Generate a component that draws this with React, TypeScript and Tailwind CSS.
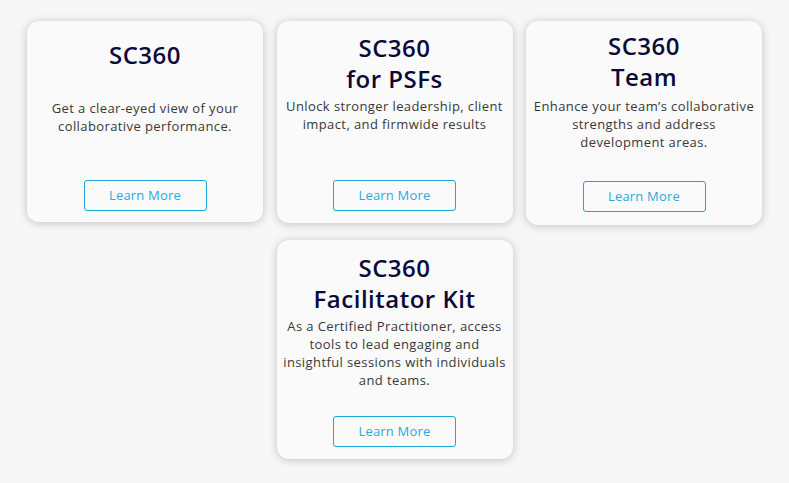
import React from 'react';

type Card = {
  title: string[];
  lines: string[];
  cls: string;
  titleCls: string;
};

const cards: Card[] = [
  {
    title: ['SC360'],
    lines: ['Get a clear-eyed view of your', 'collaborative performance.'],
    cls: 'h-[201px] pt-[18px] pb-[11px]',
    titleCls: 'mb-[29px]',
  },
  {
    title: ['SC360', 'for PSFs'],
    lines: ['Unlock stronger leadership, client', 'impact, and firmwide results'],
    cls: 'h-[202px] pt-[11px] pb-[12px]',
    titleCls: 'mb-[3px]',
  },
  {
    title: ['SC360', 'Team'],
    lines: ['Enhance your team’s collaborative', 'strengths and address', 'development areas.'],
    cls: 'h-[204px] pt-[9px] pb-[13px]',
    titleCls: 'mb-[5px]',
  },
  {
    title: ['SC360', 'Facilitator Kit'],
    lines: [
      'As a Certified Practitioner, access',
      'tools to lead engaging and',
      'insightful sessions with individuals',
      'and teams.',
    ],
    cls: 'h-[219px] pt-[12px] pb-[12px]',
    titleCls: 'mb-[3px]',
  },
];

export default function App() {
  return (
    <div
      className="min-h-screen w-full bg-[#f7f7f7] pt-[21px]"
      style={{ fontFamily: '"Open Sans", "Liberation Sans", sans-serif' }}
    >
      <div className="flex flex-wrap items-start justify-center gap-x-[13.5px] gap-y-[15px]">
        {cards.map((card, i) => (
          <div
            key={i}
            className={`flex w-[236px] flex-col items-center rounded-[12px] bg-[#fafafa] px-2 shadow-[0_1px_10px_rgba(0,0,0,0.22)] ${card.cls}`}
          >
            <h3 className={`text-center text-[24px] font-semibold leading-[31px] tracking-[0.5px] text-[#0a0a3a] ${card.titleCls}`}>
              {card.title.map((t, j) => (
                <div key={j} className="whitespace-nowrap">{t}</div>
              ))}
            </h3>
            <p className="text-center text-[13px] leading-[18px] tracking-[0.4px] text-[#383838]">
              {card.lines.map((l, j) => (
                <span key={j} className="block whitespace-nowrap">{l}</span>
              ))}
            </p>
            <button className="mt-auto h-[31px] w-[123px] rounded-[3px] border border-[#1ca7d8] text-[13px] tracking-[0.2px] text-[#29a9dc]">
              Learn More
            </button>
          </div>
        ))}
      </div>
    </div>
  );
}
